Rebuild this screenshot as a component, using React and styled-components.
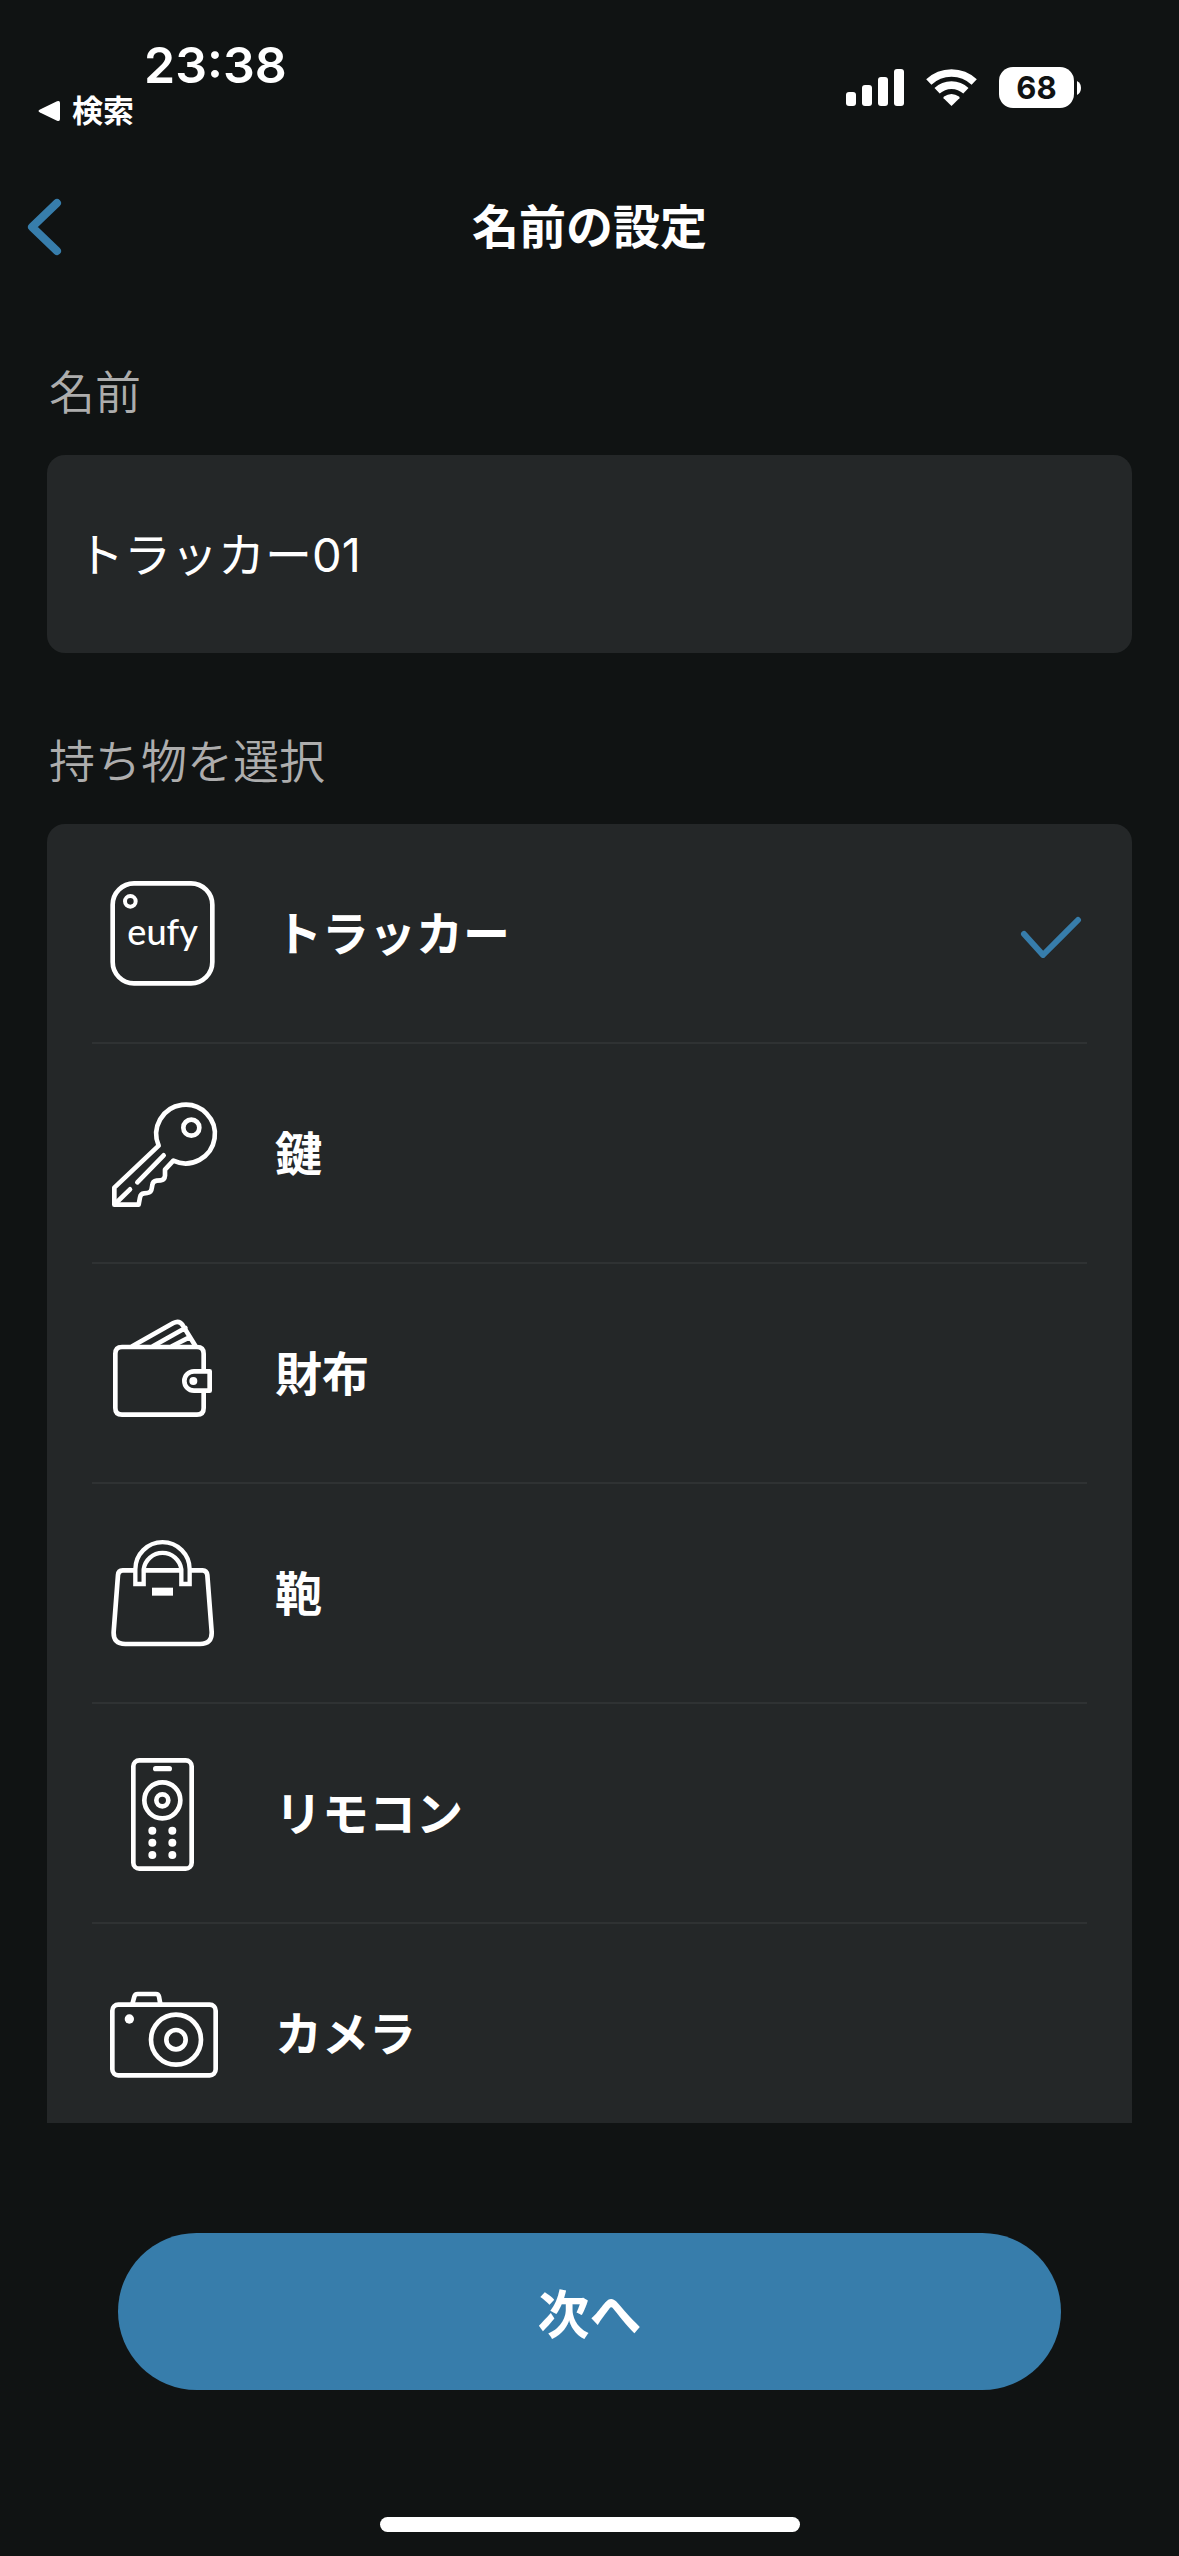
import React, { useState } from 'react';
import styled, { createGlobalStyle } from 'styled-components';

const COLORS = {
  background: '#101313',
  card: '#242728',
  divider: '#2f3233',
  accent: '#377dab',
  muted: '#adadad',
  white: '#fff',
};

const TrackerIcon = () => (
  <IconSvg>
    <rect x="68" y="70" width="299" height="300" rx="64" />
    <circle cx="121" cy="124" r="16" strokeWidth="12" />
    <LogoText x="112" y="256">
      eufy
    </LogoText>
  </IconSvg>
);

const KeyIcon = () => (
  <IconSvg>
    <path d="M206 197A88 88 0 1 1 250 242L225 269V287Q224 300 212 301L200 302Q188 304 187 315L185 326Q184 338 172 339L162 340Q152 341 150 352L146 374H73V323Z" />
    <path d="M221 226L142 307M120 328L75 372" />
    <circle cx="304" cy="143" r="24" />
  </IconSvg>
);

const WalletIcon = () => (
  <IconSvg>
    <path d="M341 208V161Q341 141 321 141H96Q76 141 76 161V324Q76 344 96 344H321Q341 344 341 324V278" />
    <path d="M128 138L250 69Q267 60 277 74L315 136M190 138L286 84M247 138L298 112" />
    <path d="M359 214H312A29 29 0 0 0 312 272H359Z" />
    <Dot cx="310" cy="243" r="12" />
  </IconSvg>
);

const BagIcon = () => (
  <IconSvg>
    <path d="M132 151H98Q85 151 84 165L71 335Q69 372 106 372H330Q367 372 365 335L352 165Q350 151 338 151H304M166 151H268" />
    <path
      d="M136 192V148A81 81 0 0 1 299 148V192H274V148A57 57 0 0 0 161 148V192Z"
      strokeWidth="13"
      strokeLinejoin="miter"
    />
    <path d="M186 215H249" strokeWidth="24" strokeLinecap="butt" />
  </IconSvg>
);

const RemoteIcon = () => (
  <IconSvg>
    <rect x="130" y="61" width="175" height="325" rx="18" />
    <path d="M197 86H238" strokeWidth="16" />
    <circle cx="217" cy="181" r="54" />
    <circle cx="217" cy="181" r="18" />
    {[272, 308, 345].map(y => (
      <g key={y}>
        <Dot cx="187" cy={y} r="12" />
        <Dot cx="247" cy={y} r="12" />
      </g>
    ))}
  </IconSvg>
);

const CameraIcon = () => (
  <IconSvg>
    <rect x="67" y="134" width="310" height="212" rx="18" />
    <path d="M127 132L133 110Q135 102 143 102H198Q205 102 207 110L211 132" />
    <Dot cx="118" cy="177" r="14" />
    <circle cx="258" cy="239" r="75" />
    <circle cx="258" cy="239" r="29" />
  </IconSvg>
);

const ITEMS = [
  { id: 'tracker', label: 'トラッカー', Icon: TrackerIcon },
  { id: 'key', label: '鍵', Icon: KeyIcon },
  { id: 'wallet', label: '財布', Icon: WalletIcon },
  { id: 'bag', label: '鞄', Icon: BagIcon },
  { id: 'remote', label: 'リモコン', Icon: RemoteIcon },
  { id: 'camera', label: 'カメラ', Icon: CameraIcon },
];

const StatusBar = () => (
  <StatusWrapper>
    <div>
      <Time>23:38</Time>
      <BackToApp href="#search">
        <svg width="22" height="22" viewBox="0 0 22 22" fill="currentColor">
          <path d="M19 1.3Q22 0 22 3V19Q22 22 19 20.7L2 12.6Q-1 11 2 9.4Z" />
        </svg>
        検索
      </BackToApp>
    </div>
    <Indicators>
      <svg width="58" height="37" viewBox="0 0 58 37" fill="currentColor">
        <rect x="0" y="23" width="10" height="14" rx="3" />
        <rect x="16" y="16" width="10" height="21" rx="3" />
        <rect x="32" y="8" width="10" height="29" rx="3" />
        <rect x="48" y="0" width="10" height="37" rx="3" />
      </svg>
      <svg width="51" height="37" viewBox="0 0 51 37" fill="none">
        <path
          d="M2.8 13.1A33 33 0 0 1 48.2 13.1M11.1 21.8A21 21 0 0 1 39.9 21.8"
          stroke="currentColor"
          strokeWidth="7.6"
        />
        <path
          d="M25.5 37L17.6 29.3Q17 28.3 18 27.6Q25.5 22.4 33 27.6Q34 28.3 33.4 29.3Z"
          fill="currentColor"
        />
      </svg>
      <Battery>
        <BatteryLevel>68</BatteryLevel>
        <svg width="4" height="14" viewBox="0 0 4 14" fill="currentColor">
          <path d="M0 0Q4 2 4 7T0 14Z" />
        </svg>
      </Battery>
    </Indicators>
  </StatusWrapper>
);

const App = () => {
  const [name, setName] = useState('トラッカー01');
  const [selected, setSelected] = useState('tracker');

  return (
    <Screen>
      <GlobalStyle />
      <StatusBar />

      <NavBar>
        <BackButton type="button" aria-label="戻る">
          <svg width="38" height="60" viewBox="0 0 38 60" fill="none">
            <path
              d="M33 6L8 30L33 54"
              stroke="currentColor"
              strokeWidth="8"
              strokeLinecap="round"
              strokeLinejoin="round"
            />
          </svg>
        </BackButton>
        <Title>名前の設定</Title>
      </NavBar>

      <Content>
        <FieldLabel htmlFor="name">名前</FieldLabel>
        <NameInput
          id="name"
          type="text"
          value={name}
          onChange={ev => setName(ev.target.value)}
        />

        <ListLabel id="belongings">持ち物を選択</ListLabel>
        <List role="radiogroup" aria-labelledby="belongings">
          {ITEMS.map(({ id, label, Icon }) => (
            <Row key={id}>
              <Radio
                type="radio"
                name="item"
                value={id}
                checked={selected === id}
                onChange={() => setSelected(id)}
              />
              <Icon />
              <RowText>{label}</RowText>
              {selected === id && (
                <svg width="62" height="48" viewBox="0 0 62 48" fill="none">
                  <path
                    d="M4 24L23 45L58 10"
                    stroke={COLORS.accent}
                    strokeWidth="6"
                    strokeLinecap="round"
                    strokeLinejoin="round"
                  />
                </svg>
              )}
            </Row>
          ))}
        </List>
      </Content>

      <Footer>
        <NextButton type="button">次へ</NextButton>
        <HomeIndicator />
      </Footer>
    </Screen>
  );
};

const GlobalStyle = createGlobalStyle`
  *, *::before, *::after {
    box-sizing: border-box;
  }

  body {
    margin: 0;
    background: ${COLORS.background};
  }

  body, input, button {
    font-family: Inter, 'Noto Sans CJK JP', sans-serif;
  }
`;

const Screen = styled.div`
  display: flex;
  flex-direction: column;
  height: 100vh;
  color: ${COLORS.white};
`;

const StatusWrapper = styled.header`
  display: flex;
  justify-content: space-between;
  align-items: flex-start;
  height: 150px;
  padding: 40px 98px 0 38px;
`;

const Time = styled.div`
  padding-left: 106px;
  font-size: 50px;
  line-height: 50px;
  font-weight: 600;
`;

const BackToApp = styled.a`
  display: flex;
  align-items: center;
  gap: 12px;
  color: inherit;
  font-size: 31px;
  line-height: 42px;
  font-weight: 600;
  text-decoration: none;
`;

const Indicators = styled.div`
  display: flex;
  align-items: center;
  gap: 22px;
  padding-top: 27px;
`;

const Battery = styled.div`
  display: flex;
  align-items: center;
  gap: 3px;
`;

const BatteryLevel = styled.span`
  width: 75px;
  border-radius: 14px;
  background: ${COLORS.white};
  color: ${COLORS.background};
  font-size: 31px;
  line-height: 41px;
  font-weight: 700;
  text-align: center;
`;

const NavBar = styled.nav`
  display: grid;
  grid-template-columns: 1fr auto 1fr;
  align-items: center;
  height: 154px;
  padding: 0 24px;
`;

const BackButton = styled.button`
  display: flex;
  justify-self: start;
  padding: 0;
  border: none;
  background: none;
  color: ${COLORS.accent};
`;

const Title = styled.h1`
  margin: 0;
  font-size: 47px;
  line-height: 64px;
  font-weight: 600;
`;

const Content = styled.main`
  display: flex;
  flex-direction: column;
  flex: 1;
  min-height: 0;
  padding: 56px 47px 0;
`;

const FieldLabel = styled.label`
  margin-bottom: 31px;
  padding-left: 2px;
  color: ${COLORS.muted};
  font-size: 46px;
  line-height: 64px;
  font-weight: 350;
`;

const ListLabel = styled(FieldLabel).attrs({ as: 'h2' })`
  margin-top: 76px;
`;

const NameInput = styled.input`
  width: 100%;
  height: 198px;
  flex-shrink: 0;
  padding: 0 30px 6px;
  border: none;
  border-radius: 18px;
  outline: none;
  background: ${COLORS.card};
  color: ${COLORS.white};
  font-size: 47px;
  font-weight: 400;
`;

const List = styled.div`
  flex: 1;
  min-height: 0;
  padding: 0 45px;
  border-radius: 18px 18px 0 0;
  background: ${COLORS.card};
  overflow-y: auto;
  scrollbar-width: none;
`;

const Row = styled.label`
  display: flex;
  align-items: center;
  height: 220px;
  padding: 2px 5px 0 10px;
  border-bottom: 2px solid ${COLORS.divider};

  &:last-child {
    border-bottom-color: transparent;
  }
`;

const Radio = styled.input`
  appearance: none;
  width: 0;
  margin: 0;
`;

const RowText = styled.span`
  flex: 1;
  padding-left: 53px;
  font-size: 47px;
  line-height: 64px;
  font-weight: 600;
`;

const IconSvg = styled.svg.attrs({
  viewBox: '36 42 360 360',
  strokeWidth: 14,
  strokeLinecap: 'round',
  strokeLinejoin: 'round',
})`
  width: 120px;
  height: 120px;
  fill: none;
  stroke: ${COLORS.white};
`;

const Dot = styled.circle`
  fill: ${COLORS.white};
  stroke: none;
`;

const LogoText = styled.text`
  fill: ${COLORS.white};
  stroke: none;
  font-family: Lato, sans-serif;
  font-size: 108px;
  font-weight: 500;
`;

const Footer = styled.footer`
  display: flex;
  flex-direction: column;
  align-items: center;
  padding: 110px 118px 24px;
`;

const NextButton = styled.button`
  width: 100%;
  height: 157px;
  border: none;
  border-radius: 79px;
  background: ${COLORS.accent};
  color: ${COLORS.white};
  font-size: 52px;
  font-weight: 600;
`;

const HomeIndicator = styled.div`
  width: 420px;
  height: 15px;
  margin-top: 127px;
  border-radius: 8px;
  background: ${COLORS.white};
`;

export default App;
